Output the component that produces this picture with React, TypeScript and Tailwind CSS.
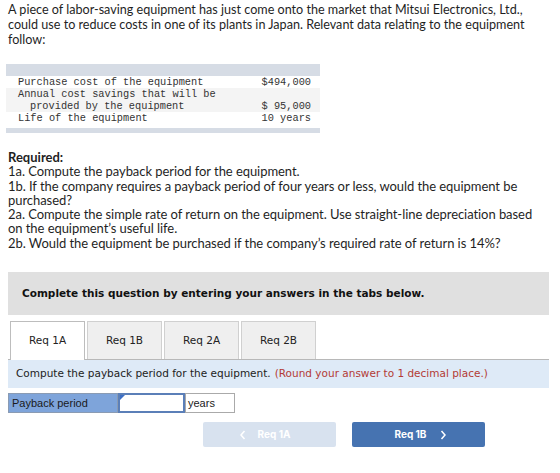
import React from "react";

const body = { fontFamily: "Lato, 'Open Sans', sans-serif" };
const mono = { fontFamily: "'Liberation Mono', 'Courier New', monospace" };
const verdana = { fontFamily: "'DejaVu Sans', Verdana, sans-serif" };
const arial = { fontFamily: "'Liberation Sans', Arial, sans-serif" };

function Tab({ label, active }: { label: string; active?: boolean }) {
  return (
    <div
      className={
        "w-[75px] h-[38px] flex items-center justify-center text-[10.5px] text-[#222] border border-b-0 " +
        (active ? "bg-white border-[#bdbdbd] h-[39px] -mb-px relative z-10" : "bg-[#efefef] border-[#d0d0d0]")
      }
      style={verdana}
    >
      {label}
    </div>
  );
}

export default function App() {
  return (
    <div className="w-[560px] h-[473px] bg-white overflow-hidden text-[#1f1f1f]" style={body}>
      <p className="px-2 pt-[2px] text-[12.6px] leading-[15px] whitespace-nowrap">
        A piece of labor-saving equipment has just come onto the market that Mitsui Electronics, Ltd.,
        <br />
        could use to reduce costs in one of its plants in Japan. Relevant data relating to the equipment
        <br />
        follow:
      </p>

      {/* data table */}
      <div className="ml-[6px] mt-[17px] w-[314px] text-[10.3px] leading-[12px] text-[#333]" style={mono}>
        <div className="h-[12px] bg-[#d6dce5]" />
        <div className="flex justify-between pl-[12px] pr-[9px]">
          <span>Purchase cost of the equipment</span>
          <span>$494,000</span>
        </div>
        <div className="flex justify-between items-end pl-[12px] pr-[9px] bg-[#f4f4f4]">
          <span>
            Annual cost savings that will be
            <br />
            <span className="pl-[12px]">provided by the equipment</span>
          </span>
          <span>$ 95,000</span>
        </div>
        <div className="flex justify-between pl-[12px] pr-[9px] pb-[4px]">
          <span>Life of the equipment</span>
          <span>10 years</span>
        </div>
        <div className="h-[5px] bg-[#d6dce5]" />
      </div>

      <div className="px-2 mt-[17px] text-[13px] leading-[14.3px] tracking-[-0.06px] whitespace-nowrap">
        <div className="font-bold tracking-normal">Required:</div>
        <div>1a. Compute the payback period for the equipment.</div>
        <div>
          1b. If the company requires a payback period of four years or less, would the equipment be
          <br />
          purchased?
        </div>
        <div>
          2a. Compute the simple rate of return on the equipment. Use straight-line depreciation based
          <br />
          on the equipment’s useful life.
        </div>
        <div>2b. Would the equipment be purchased if the company’s required rate of return is 14%?</div>
      </div>

      <div
        className="ml-2 mt-[22px] w-[541px] h-[43px] bg-[#e0e0e0] flex items-center pl-[14px] text-[10.5px] font-bold text-[#111]"
        style={verdana}
      >
        Complete this question by entering your answers in the tabs below.
      </div>

      <div className="ml-[10px] mt-[6px] flex gap-[2px] items-end">
        <Tab label="Req 1A" active />
        <Tab label="Req 1B" />
        <Tab label="Req 2A" />
        <Tab label="Req 2B" />
      </div>
      <div
        className="ml-2 w-[541px] h-[29px] bg-[#deeaf7] border-t border-[#b8b8b8] flex items-center pl-[8px] text-[10.5px] text-[#222]"
        style={verdana}
      >
        Compute the payback period for the equipment.
        <span className="ml-[4px] text-[#b33a35]">(Round your answer to 1 decimal place.)</span>
      </div>

      <div className="ml-2 mt-[5px] flex h-[20px] text-[11px]" style={arial}>
        <div className="w-[110px] bg-[#7ea4da] border border-[#8a9bb3] flex items-center pl-[3px] text-[#1a1a1a]">
          Payback period
        </div>
        <div className="relative w-[67px] bg-white border-2 border-[#5b7fb8]">
          <div className="absolute left-0 top-0 w-0 h-0 border-t-[5px] border-r-[5px] border-t-[#3d6fc4] border-r-transparent" />
        </div>
        <div className="w-[50px] bg-white border border-[#aaaaaa] flex items-center pl-[2px] text-[#222]">
          years
        </div>
      </div>

      <div className="mt-[9px] flex gap-[16px] pl-[203px] text-[10px] font-bold text-white" style={{ fontFamily: "Inter, 'Open Sans', sans-serif" }}>
        <div className="w-[133px] h-[25px] bg-[#d8e2ef] rounded-[2px] flex items-center justify-center">
          <svg width="8" height="10" viewBox="0 0 8 10" className="mr-[11px]">
            <path d="M5.5 1 L2 5 L5.5 9" fill="none" stroke="white" strokeWidth="1.5" />
          </svg>
          <span className="mr-[10px]">Req 1A</span>
        </div>
        <div className="w-[133px] h-[25px] bg-[#4673b1] rounded-[2px] flex items-center justify-center">
          <span className="ml-[4px]">Req 1B</span>
          <svg width="8" height="10" viewBox="0 0 8 10" className="ml-[12px]">
            <path d="M2.5 1 L6 5 L2.5 9" fill="none" stroke="white" strokeWidth="1.5" />
          </svg>
        </div>
      </div>
    </div>
  );
}
